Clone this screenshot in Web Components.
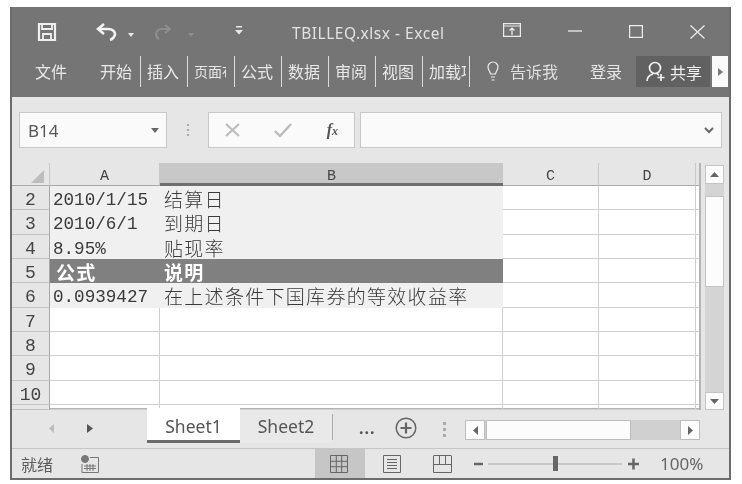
<!DOCTYPE html>
<html lang="zh"><head><meta charset="utf-8"><title>TBILLEQ.xlsx - Excel</title>
<style>
html,body{margin:0;background:#fff;overflow:hidden}
body{padding:7px 0 0 10px;font-family:"Noto Sans","Noto Sans CJK SC",sans-serif}
</style></head><body>
<xl-window>
  <xl-titlebar title-text="TBILLEQ.xlsx - Excel"></xl-titlebar>
  <xl-ribbon></xl-ribbon>
  <xl-formula name="B14"></xl-formula>
  <xl-sheet></xl-sheet>
  <xl-tabs></xl-tabs>
  <xl-status></xl-status>
</xl-window>
<script>
function def(tag,html,init){
  customElements.define(tag,class extends HTMLElement{
    constructor(){super();this.attachShadow({mode:'open'}).innerHTML=typeof html==='function'?html(this):html;}
    connectedCallback(){if(init)init(this);}
  });
}
def('xl-window',`<style>:host{display:flex;flex-direction:column;width:717px;height:471px;border:solid #6c6c6c;border-width:0 2px 2px 2px;background:#e6e6e6;filter:blur(.45px)}</style><slot></slot>`);

def('xl-titlebar',`<style>
:host{display:block;height:49px;background:#757575;color:#e2e2e2}
.r{display:flex;align-items:flex-start;height:100%;padding-top:15px;box-sizing:border-box}
svg{display:block;flex:none}
.t{font:15.500px/20px "Noto Sans",sans-serif;letter-spacing:.52px;white-space:nowrap;width:211px;margin-left:49px;margin-top:1px}
</style><div class="r">
<svg style="margin-left:25px" width="20" height="20" viewBox="0 0 20 20" fill="none" stroke="#efefef" stroke-width="2.2"><path d="M2 2h16v16H2z"/><path d="M5 2v5h10V2M6 18v-6h8v6" stroke-width="1.8"/></svg>
<svg style="margin:1px 0 0 39px" width="22" height="18" viewBox="0 0 22 18" fill="none" stroke="#f2f2f2" stroke-width="2.6"><path d="M8 1L2 6l6 5"/><path d="M3 6h9c5 0 7 3 7 5s-2 5-5 6"/></svg>
<svg style="margin:11px 0 0 10px" width="6" height="4" viewBox="0 0 6 4" fill="#e8e8e8"><path d="M0 0h6L3 4z"/></svg>
<svg style="margin:2px 0 0 21px" width="16" height="16" viewBox="0 0 16 16" fill="none" stroke="#8e8e8e" stroke-width="2"><path d="M10 1l5 4-5 4"/><path d="M14 5H7C3 5 1 8 1 10s1 4 3 5"/></svg>
<svg style="margin:11px 0 0 17px" width="6" height="4" viewBox="0 0 6 4" fill="#8e8e8e"><path d="M0 0h6L3 4z"/></svg>
<svg style="margin:4px 0 0 41px" width="8" height="9" viewBox="0 0 8 9" fill="#e8e8e8"><path d="M1 0h6v1.4H1zM0 4h8L4 8.500z"/></svg>
<span class="t">TBILLEQ.xlsx - Excel</span>
<svg style="margin-top:1px" width="18" height="14" viewBox="0 0 18 14" fill="none" stroke="#ececec" stroke-width="1.2"><path d="M.6.6h16.800v12.800H.6zM.6 3h16.800M9 12V5.500M6.500 7.500L9 5l2.500 2.500"/></svg>
<svg style="margin:8px 0 0 47px" width="14" height="2" viewBox="0 0 14 2"><path d="M0 1h14" stroke="#ececec" stroke-width="1.300"/></svg>
<svg style="margin:3px 0 0 47px" width="14" height="13" viewBox="0 0 14 13" fill="none" stroke="#ececec" stroke-width="1.300"><path d="M.6.6h12.800v11.800H.6z"/></svg>
<svg style="margin:3px 0 0 47px" width="15" height="14" viewBox="0 0 15 14" fill="none" stroke="#ececec" stroke-width="1.200"><path d="M.5.500l14 13M14.500.500l-14 13"/></svg>
</div>`);

def('xl-tab',`<style>
:host{display:block;width:47px;height:31px;box-sizing:border-box;border-right:1px solid #dcdcdc;overflow:hidden}
div{height:31px;font:var(--fs,16px)/30px "Noto Sans CJK SC",sans-serif;color:#e8e8e8;white-space:nowrap;width:var(--w,34px);margin-left:6px;overflow:hidden}
</style><div><slot></slot></div>`);

def('xl-ribbon',`<style>
:host{display:block;height:41px;background:#757575;color:#e8e8e8}
.r{display:flex;align-items:flex-start;font:16px/30px "Noto Sans CJK SC",sans-serif;white-space:nowrap}
.f{margin-left:23px;width:59px}
svg{display:block;flex:none}
.share{width:74px;height:31px;background:#616161;display:flex;align-items:center;box-sizing:border-box;padding-left:10px;gap:5px;color:#f0f0f0}
.btn{margin-left:2px;width:16px;height:31px;background:#fafafa;display:flex;align-items:center;justify-content:center}
</style><div class="r"><span class="f">文件</span>
<xl-tab>开始</xl-tab><xl-tab>插入</xl-tab><xl-tab style="--fs:14px;--w:32px">页面布局</xl-tab><xl-tab>公式</xl-tab><xl-tab>数据</xl-tab><xl-tab>审阅</xl-tab><xl-tab>视图</xl-tab><xl-tab style="--w:37px">加载项</xl-tab>
<svg style="margin:5px 0 0 17px" width="12" height="21" viewBox="0 0 12 21" fill="none" stroke="#ececec" stroke-width="1.200"><path d="M3.500 13C3 10 1 9 1 6a5 5 0 0110 0c0 3-2 4-2.500 7zM4 16h4M4.500 19h3"/></svg>
<span style="margin-left:11px;width:80px;color:#dedede">告诉我</span><span style="width:46px;color:#e8e8e8">登录</span>
<div class="share"><svg width="19" height="21" viewBox="0 0 19 21" fill="none" stroke="#f2f2f2" stroke-width="1.700"><circle cx="9" cy="7" r="5.500"/><path d="M1 20c0-4 3-6 6-7M11 13l2 1"/><path d="M15 13v7M11.500 16.500h7"/></svg><span>共享</span></div>
<div class="btn"><svg width="5" height="8" viewBox="0 0 5 8" fill="#777"><path d="M0 0l5 4-5 4z"/></svg></div>
</div>`);

def('xl-formula',el=>`<style>
:host{display:flex;height:66px;box-sizing:border-box;padding:15px 7px 0 7px;background:#e6e6e6;align-items:flex-start}
.b{height:36px;box-sizing:border-box;background:#fafafa;border:1px solid #c8c8c8;display:flex;align-items:center}
.n{width:148px;font:17px "Noto Sans",sans-serif;color:#555;padding:0 8px;justify-content:space-between}
.d{width:41px;display:flex;flex-direction:column;align-items:center;gap:3px;padding-top:12px;box-sizing:border-box;height:36px}
.d i{width:2px;height:2px;background:#aaa}
.fx{width:147px;justify-content:space-between;padding:0 16px}
.i{width:362px;margin-left:5px;justify-content:flex-end;padding-right:7px}
em{font:italic bold 16px "Liberation Serif",serif;color:#555}
svg{display:block}
</style>
<div class="b n"><span>${el.getAttribute('name')}</span><svg style="margin-right:-1px" width="8" height="5" viewBox="0 0 8 5" fill="#666"><path d="M0 0h8L4 5z"/></svg></div>
<div class="d"><i></i><i></i><i></i></div>
<div class="b fx"><svg width="15" height="14" viewBox="0 0 15 14" fill="none" stroke="#bcbcbc" stroke-width="2.200"><path d="M1 1l13 12M14 1L1 13"/></svg>
<svg width="18" height="15" viewBox="0 0 18 15" fill="none" stroke="#bcbcbc" stroke-width="2.400"><path d="M1 8l5 5L17 1"/></svg>
<em>f<small style="font-size:12px">x</small></em></div>
<div class="b i"><svg width="10" height="7" viewBox="0 0 10 7" fill="none" stroke="#666" stroke-width="2"><path d="M1 1l4 4 4-4"/></svg></div>`);

const rows=[['2','2010/1/15','结算日',0],['3','2010/6/1','到期日',0],['4','8.95%','贴现率',0],['5','公式','说明',1],['6','0.0939427','在上述条件下国库券的等效收益率',0],['7'],['8'],['9'],['10'],['']];
def('xl-sheet',()=>{
 let c='';
 for(const h of [['',0],['A',0],['B',1],['C',0],['D',0],['',2]]){c+=`<div class="ch ${h[1]==1?'sel':''} ${h[1]==2?'end':''}">${h[0]}</div>`;}
 c=c.replace('<div class="ch  "></div>','<div class="ch corner"><svg width="13" height="13" viewBox="0 0 13 13"><path d="M13 0v13H0z" fill="#bdbdbd"/></svg></div>');
 rows.forEach((r,i)=>{
  const fill=r[1]?(r[3]?'h':'s'):'';
  c+=`<div class="rh">${r[0]}</div><div class="c ${fill} txt">${r[1]||''}</div><div class="c ${fill} txt">${r[2]||''}</div><div class="c"></div><div class="c"></div><div class="c e"></div>`;
 });
 return `<style>
:host{display:flex;flex:none;height:247px;background:#e6e6e6}
.g{display:grid;grid-template-columns:38px 110px 343px 96px 97px 3px;grid-template-rows:23px repeat(9,24.330px) 5px;border-right:2px solid #b4b4b4;border-bottom:2px solid #b4b4b4;box-sizing:content-box;height:245px;background:#fff}
.ch{background:#e6e6e6;border-right:1px solid #c8c8c8;border-bottom:1px solid #a8a8a8;box-sizing:border-box;font:15px/28px "Liberation Mono",monospace;color:#444;text-align:center}
.corner{display:flex;justify-content:flex-end;align-items:flex-start;padding:7px 5px 0 0}
.sel{background:#c8c8c8;border-bottom:3px solid #6e6e6e;border-right:0}
.end{border-right:0}
.rh{background:#e6e6e6;border-right:1px solid #a8a8a8;border-bottom:1px solid #c4c4c4;box-sizing:border-box;font:18px/28px "Liberation Mono",monospace;color:#444;text-align:center;height:100%;min-height:0}
.c{border-right:1px solid #cfcfcf;border-bottom:1px solid #cfcfcf;box-sizing:border-box;white-space:nowrap;min-height:0;min-width:0}
.e{border-right:0}
.txt{font:17.600px/24px "Liberation Mono","Noto Sans CJK SC",monospace;color:#3a3a3a;padding:2px 0 0 3px}
.txt+.txt{font-size:19px;letter-spacing:1.300px;padding:1px 0 0 4px;font-family:"Noto Sans CJK SC",sans-serif;line-height:23px;font-weight:300}
.s{background:#f0f0f0;border-color:#f0f0f0}
.c.h{background:#808080;border-color:#808080;color:#fff;font-family:"Noto Sans CJK SC",sans-serif;font-weight:700;font-size:19px;letter-spacing:1.300px;line-height:23px;padding:1px 0 0 6px}
.c.h+.c.h{font-weight:700;padding-left:4px}
.vs{width:19px;margin-left:4px;margin-top:2px;height:245px;background:#d4d4d4;display:flex;flex-direction:column}
.vs div{box-sizing:border-box;border:1px solid #c4c4c4;background:#fcfcfc;display:flex;align-items:center;justify-content:center}
.up{height:19px}.th{height:91px;margin-top:12px}.dn{height:18px;margin-top:auto}
</style><div class="g">${c}</div><div class="vs"><div class="up"><svg width="9" height="5" viewBox="0 0 9 5" fill="#666"><path d="M4.500 0L9 5H0z"/></svg></div><div class="th"></div><div class="dn"><svg width="9" height="5" viewBox="0 0 9 5" fill="#666"><path d="M0 0h9L4.500 5z"/></svg></div></div>`;
});

def('xl-tabs',`<style>
:host{display:flex;height:38px;flex:none;background:#e6e6e6;align-items:flex-start;color:#555;font:17.500px "Noto Sans",sans-serif}
svg{display:block;flex:none}
.nav{width:135px;display:flex;align-items:center;height:36px;padding-left:37px;box-sizing:border-box;gap:33px}
.tab{height:33px;box-sizing:border-box;line-height:33px;text-align:center}
.on{width:93px;height:35px;margin-top:-2px;line-height:36px;background:#fff;border-bottom:3px solid #6a6a6a;position:relative}
.off{width:92px;background:#e9e9e9}
.sep{width:1px;height:26px;background:#aaa;margin:4px 0 0}
.more{margin-left:26px;width:30px;line-height:36px;letter-spacing:1px;font-weight:700;color:#555;font-size:16px}
.dots{display:flex;flex-direction:column;gap:3px;margin:12px 0 0 17px;width:21px;align-items:center}
.dots i{width:3px;height:3px;background:#aaa}
.hs{display:flex;margin:10px 0 0 10px;height:20px;width:235px;background:#d0d0d0}
.hs div{box-sizing:border-box;border:1px solid #bdbdbd;background:#fcfcfc;display:flex;align-items:center;justify-content:center;height:20px}
</style>
<div class="nav"><svg width="5" height="9" viewBox="0 0 5 9" fill="#bbb"><path d="M5 0v9L0 4.500z"/></svg><svg width="6" height="9" viewBox="0 0 6 9" fill="#555"><path d="M0 0v9l6-4.500z"/></svg></div>
<div class="tab on">Sheet1</div><div class="tab off">Sheet2</div><div class="sep"></div>
<div class="more">...</div>
<svg style="margin:7px 0 0 6px" width="22" height="22" viewBox="0 0 22 22" fill="none" stroke="#666" stroke-width="1.500"><circle cx="11" cy="11" r="9.800"/><path stroke-width="2.200" d="M11 5.500v11M5.500 11h11"/></svg>
<div class="dots"><i></i><i></i><i></i></div>
<div class="hs"><div style="width:20px"><svg width="5" height="9" viewBox="0 0 5 9" fill="#666"><path d="M5 0v9L0 4.500z"/></svg></div><div style="width:145px;margin-left:1px"></div><div style="width:20px;margin-left:auto"><svg width="5" height="9" viewBox="0 0 5 9" fill="#666"><path d="M0 0v9l5-4.500z"/></svg></div></div>`);

def('xl-status',`<style>
:host{display:flex;flex:1;align-items:center;box-sizing:border-box;border-top:1px solid #c6c6c6;background:#e6e6e6;font:16px "Noto Sans CJK SC",sans-serif;color:#5a5a5a}
svg{display:block;flex:none}
.act{margin-left:216px;width:50px;align-self:stretch;background:#c6c6c6;display:flex;align-items:center;justify-content:center;padding-right:3px;box-sizing:border-box}
</style>
<span style="margin-left:9px;width:60px">就绪</span>
<svg width="18" height="18" viewBox="0 0 18 18" fill="none" stroke="#777"><circle cx="4" cy="4" r="3.500" fill="#777"/><path d="M9 2.500h8.500V17.500H1V9M3 11h12M3 13.500h12M6 9v7M9 9v7M12 9v7" stroke-width="1"/></svg>
<div class="act"><svg width="18" height="18" viewBox="0 0 18 18" fill="none" stroke="#666"><path d="M.5.500h17v17H.5zM6.300.500v17M11.700.500v17M.5 6.300h17M.5 11.700h17"/></svg></div>
<svg style="margin-left:18px" width="18" height="18" viewBox="0 0 18 18" fill="none" stroke="#666"><path d="M.5.500h17v17H.5zM4 4.500h10M4 7.500h10M4 10.500h10M4 13.500h10"/></svg>
<svg style="margin-left:32px" width="19" height="18" viewBox="0 0 19 18" fill="none" stroke="#666"><path d="M.5 1v16.500h18V1M.5.500h18M.5 9.500h18M6.500.500v9M12.500.500v9"/></svg>
<svg style="margin-left:22px" width="165" height="18" viewBox="0 0 165 18"><path d="M0 9h9" stroke="#666" stroke-width="2.500"/><path d="M14 9h134" stroke="#aaa" stroke-width="1"/><path d="M79 1h5v15h-5z" fill="#666"/><path d="M154 9h11M159.500 3.500v11" stroke="#666" stroke-width="2.500"/></svg>
<span style="margin-left:21px;font:17px 'Noto Sans',sans-serif;color:#666">100%</span>`);
</script>
</body></html>
